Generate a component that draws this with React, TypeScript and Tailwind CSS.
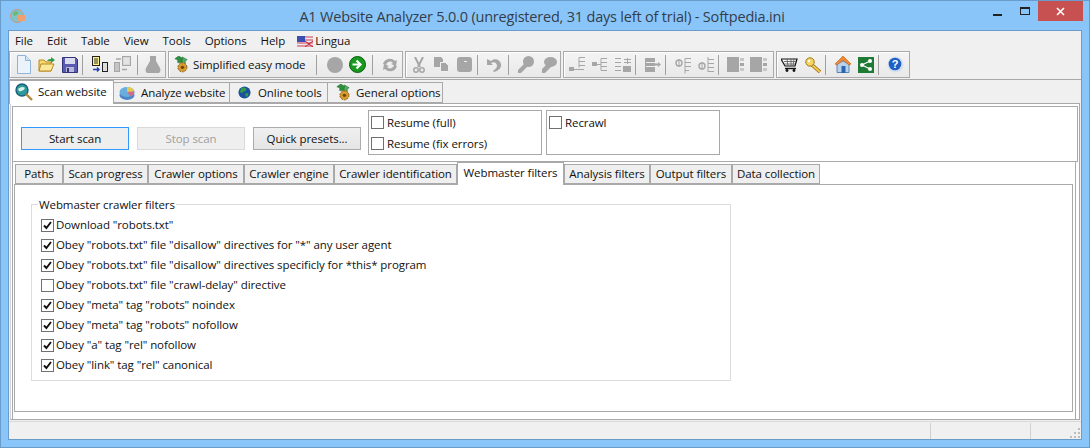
import React from 'react';

const Sep = () => <div className="w-[1px] h-[20px] bg-[#a0a0a0] mx-[1px] shrink-0" />;

const Slot: React.FC<{ children: React.ReactNode }> = ({ children }) => (
  <div className="w-[23px] h-[22px] flex items-center justify-center shrink-0">{children}</div>
);

const G = '#a6a6a6';

const Cog = () => (
  <svg width="17" height="17" viewBox="0 0 18 18">
    <path d="M6 0l5 3-1.500 1v3H5V4L2 3z" fill="#2f8f3f" stroke="#1c6a2b" strokeWidth="0.6" />
    <path d="M10 1l5 3-2 1v3h-3z" fill="#52b060" stroke="#1c6a2b" strokeWidth="0.6" />
    <circle cx="10" cy="12" r="4.800" fill="#d79a2b" stroke="#8a5a10" strokeWidth="1" strokeDasharray="2 1" />
    <circle cx="10" cy="12" r="1.800" fill="#6d4510" />
  </svg>
);

const toolbarIcons = {
  newFile: (
    <svg width="16" height="19" viewBox="0 0 16 19">
      <path d="M1.500 .5h8l5 5v13h-13z" fill="#eaf3fc" stroke="#8fb4d8" />
      <path d="M9.500 .5v5h5" fill="#cfe3f5" stroke="#8fb4d8" />
    </svg>
  ),
  open: (
    <svg width="17" height="16" viewBox="0 0 17 16">
      <path d="M1 3h5l2 2h5v9H1z" fill="#f5d76e" stroke="#b98a1e" />
      <path d="M3 7h13l-3 7H1z" fill="#fbe89a" stroke="#b98a1e" />
      <path d="M9 4c1-2 3-2 4-2V0l4 3-4 3V4c-1 0-3 0-4 0z" fill="#2f9e44" />
    </svg>
  ),
  save: (
    <svg width="16" height="16" viewBox="0 0 16 16">
      <path d="M.5 .5h13l2 2v13H.5z" fill="#5a5ab0" stroke="#34347e" />
      <rect x="3" y="1" width="10" height="6" fill="#d8dcec" />
      <rect x="4" y="10" width="8" height="5" fill="#b8b8d8" />
      <rect x="5" y="11" width="2" height="4" fill="#34347e" />
    </svg>
  ),
  copyDb: (
    <svg width="16" height="17" viewBox="0 0 16 17">
      <rect x=".5" y=".5" width="7" height="9" fill="#fff38a" stroke="#222" />
      <path d="M2 3h4M2 5h4M2 7h4" stroke="#333" />
      <rect x="10.500" y="6.500" width="5" height="9" fill="#ddd" stroke="#222" />
      <path d="M1 13.500h6m-2-2l2 2-2 2" stroke="#1f3fb0" strokeWidth="1.400" fill="none" />
    </svg>
  ),
  copyDbOff: (
    <svg width="17" height="17" viewBox="0 0 17 17">
      <rect x=".5" y="6.500" width="5" height="9" fill="#c4c4c4" stroke={G} />
      <rect x="8.500" y=".5" width="8" height="9" fill="#d8d8d8" stroke={G} />
      <path d="M10 3h5M10 5h5M10 7h5" stroke="#eee" />
      <path d="M8 13.500h5M2 3h5" stroke={G} strokeWidth="1.400" />
    </svg>
  ),
  flask: (
    <svg width="16" height="17" viewBox="0 0 16 17">
      <path d="M5 0h6v5l4 7c1 3 0 5-2 5H3c-2 0-3-2-2-5l4-7z" fill={G} />
    </svg>
  ),
  circle: <div className="w-[16px] h-[16px] rounded-full bg-[#a6a6a6]" />,
  go: (
    <svg width="17" height="17" viewBox="0 0 17 17">
      <circle cx="8.500" cy="8.500" r="8" fill="#179a1f" stroke="#0b5c10" />
      <path d="M3.500 8.500h7M7.500 4.500l4 4-4 4" stroke="#fff" strokeWidth="2.200" fill="none" />
    </svg>
  ),
  refresh: (
    <svg width="16" height="16" viewBox="0 0 16 16">
      <path d="M1 7a7 7 0 0 1 12-3l2-1-1 6-5-2 2-1a4 4 0 0 0-7 2z" fill={G} />
      <path d="M15 9a7 7 0 0 1-12 3l-2 1 1-6 5 2-2 1a4 4 0 0 0 7-2z" fill={G} />
    </svg>
  ),
  scissors: (
    <svg width="12" height="16" viewBox="0 0 12 16">
      <path d="M2 0l5 10M10 0L5 10" stroke={G} strokeWidth="2" />
      <circle cx="3" cy="13" r="2.200" fill="none" stroke={G} strokeWidth="1.500" />
      <circle cx="9" cy="13" r="2.200" fill="none" stroke={G} strokeWidth="1.500" />
    </svg>
  ),
  copy: (
    <svg width="15" height="15" viewBox="0 0 15 15">
      <path d="M0 0h7l2 2v3H6v5H0z" fill={G} />
      <path d="M6.500 5.500h5l3 3v6h-8z" fill={G} stroke="#efefef" />
    </svg>
  ),
  paste: (
    <svg width="15" height="15" viewBox="0 0 15 15">
      <rect x="0" y="0" width="15" height="15" rx="3" fill={G} />
      <rect x="7" y="4" width="3" height="1" fill="#efefef" />
    </svg>
  ),
  undo: (
    <svg width="15" height="15" viewBox="0 0 15 15">
      <path d="M0 2v6h6L4 6c3-2 6 0 6 3 0 2-2 3-4 5l1 1c4-1 8-4 7-8-1-5-7-6-10-3z" fill={G} />
    </svg>
  ),
  keyLeft: (
    <svg width="16" height="17" viewBox="0 0 16 17">
      <circle cx="10.500" cy="5.500" r="5.500" fill={G} />
      <path d="M7 7l-7 7v3h3l8-8z" fill={G} />
    </svg>
  ),
  keyBig: (
    <svg width="17" height="16" viewBox="0 0 17 16">
      <ellipse cx="10.500" cy="5" rx="6.500" ry="5" fill={G} />
      <path d="M7 7l-5 5v4h3l7-7z" fill={G} />
    </svg>
  ),
  rowsA: (
    <svg width="16" height="15" viewBox="0 0 16 15">
      <path d="M10 .5h6M10 4.500h6M10 8.500h6M10 12.500h5M10 .5v10" stroke={G} fill="none" />
      <rect x="0" y="10" width="5" height="4" fill={G} />
      <path d="M5 12.500h5" stroke={G} />
    </svg>
  ),
  rowsB: (
    <svg width="15" height="14" viewBox="0 0 15 14">
      <path d="M9 .5h6M9 4.500h6M9 8.500h6M9 12.500h6M9 .5v12" stroke={G} fill="none" />
      <rect x="0" y="4" width="5" height="4" fill={G} />
      <path d="M5 6.500h4" stroke={G} />
    </svg>
  ),
  rowsC: (
    <svg width="16" height="14" viewBox="0 0 16 14">
      <path d="M0 .5h6M0 4.500h6M0 8.500h6M0 12.500h6" stroke={G} fill="none" />
      <path d="M9 1.500h7M9 4.500h7M12.500 0v6" stroke={G} fill="none" />
      <rect x="8" y="8" width="8" height="6" fill={G} />
    </svg>
  ),
  boxArrow: (
    <svg width="16" height="14" viewBox="0 0 16 14">
      <rect x="0" y="0" width="10" height="14" fill={G} />
      <path d="M1 4.500h9M1 8.500h9" stroke="#efefef" />
      <path d="M10 6.500h3" stroke={G} strokeWidth="2" />
      <path d="M13 4l3 2.500-3 2.500z" fill={G} />
    </svg>
  ),
  phiA: (
    <svg width="16" height="18" viewBox="0 0 16 18">
      <circle cx="4" cy="7" r="3" fill="none" stroke={G} strokeWidth="1.400" />
      <path d="M4 3v8M10 2.500h6M10 6.500h6M10 10.500h6M10 14.500h4M10 2.500v15" stroke={G} fill="none" />
    </svg>
  ),
  phiB: (
    <svg width="16" height="18" viewBox="0 0 16 18">
      <circle cx="4" cy="10" r="3" fill="none" stroke={G} strokeWidth="1.400" />
      <path d="M4 6v8M10 3.500h6M10 7.500h6M10 11.500h6M10 15.500h6M10 1v15" stroke={G} fill="none" />
    </svg>
  ),
  blocks: (
    <svg width="17" height="15" viewBox="0 0 17 15">
      <rect x="0" y="0" width="12" height="15" fill={G} />
      <rect x="13" y="1" width="4" height="3" fill="#c8c8c8" />
      <rect x="13" y="6" width="4" height="3" fill={G} />
      <rect x="13" y="11" width="4" height="3" fill="#c8c8c8" />
    </svg>
  ),
  cart: (
    <svg width="17" height="14" viewBox="0 0 17 14">
      <path d="M0 1h16l-2 7H4z" fill="#f4f4f4" stroke="#111" strokeWidth="1.200" />
      <path d="M3 3.500h12M3.500 6h10.500M6 1l1 7M10 1v7M13 1l-1 7" stroke="#555" strokeWidth="0.800" />
      <path d="M4 10.500h11" stroke="#111" strokeWidth="1.400" />
      <circle cx="6" cy="12.500" r="1.400" fill="#111" />
      <circle cx="13" cy="12.500" r="1.400" fill="#111" />
    </svg>
  ),
  goldKey: (
    <svg width="16" height="16" viewBox="0 0 16 16">
      <path d="M6 7l9 8" stroke="#9b6d10" strokeWidth="3.400" />
      <path d="M6 7l9 8" stroke="#f3cc4c" strokeWidth="1.800" />
      <circle cx="5" cy="5" r="4.200" fill="#f6d666" stroke="#a3750f" />
      <circle cx="4" cy="4" r="1.200" fill="#fff" />
    </svg>
  ),
  home: (
    <svg width="16" height="17" viewBox="0 0 16 17">
      <path d="M2 8l6-3 6 3v8.500H2z" fill="#b7d2ee" stroke="#5d86b3" />
      <path d="M0 8l8-8 8 8-2 1-6-5-6 5z" fill="#f08a35" stroke="#bd5d12" strokeWidth="0.600" />
      <rect x="6.500" y="10" width="4" height="7" fill="#2d66a8" />
    </svg>
  ),
  share: (
    <svg width="16" height="16" viewBox="0 0 16 16">
      <rect width="16" height="16" fill="#1f7a34" />
      <path d="M4 8l8-4M4 8l8 4" stroke="#fff" strokeWidth="1.200" />
      <circle cx="4" cy="8" r="2" fill="#fff" />
      <circle cx="12" cy="4" r="2" fill="#fff" />
      <circle cx="12" cy="12" r="2" fill="#fff" />
    </svg>
  ),
  help: (
    <svg width="17" height="17" viewBox="0 0 17 17">
      <circle cx="8.500" cy="8.500" r="8" fill="#d5dff0" />
      <circle cx="8" cy="8" r="6.300" fill="#1f5fc4" />
      <text x="8" y="12" fontSize="11" fontWeight="700" fill="#fff" textAnchor="middle" fontFamily="Liberation Sans">?</text>
    </svg>
  ),
};

const ScanIcon = () => (
  <svg width="18" height="18" viewBox="0 0 18 18">
    <circle cx="7" cy="7" r="6" fill="#2f9a9a" stroke="#1a5f7a" strokeWidth="1.400" />
    <path d="M3 6c2-2 5-3 7-1-1 2-4 4-6 3z" fill="#d9f0e8" />
    <path d="M11 11l6 6" stroke="#b58a3c" strokeWidth="2.400" />
  </svg>
);

const PieIcon = () => (
  <svg width="16" height="14" viewBox="0 0 16 14">
    <ellipse cx="8" cy="9" rx="7.500" ry="5" fill="#4a86c8" />
    <ellipse cx="8" cy="6" rx="7.500" ry="5" fill="#6aaee0" />
    <path d="M8 6V1c4 0 6 2 7.500 4.500z" fill="#e7c84a" />
    <path d="M8 6l7.500-.5c0 2-2 4-4 5z" fill="#d26a8a" />
  </svg>
);

const GlobeIcon = () => (
  <svg width="13" height="13" viewBox="0 0 14 14">
    <circle cx="7" cy="7" r="6.500" fill="#1c4fa0" />
    <path d="M4 2c3-1 5 0 5 2S6 5 5 7 3 7 2 6z" fill="#2f9e44" />
    <path d="M8 8c2-1 4 0 3 2s-2 2-3 1z" fill="#2f9e44" />
  </svg>
);

const AppIcon = () => (
  <svg width="16" height="16" viewBox="0 0 16 16">
    <circle cx="7" cy="8" r="6.500" fill="#7cc4c8" stroke="#e0876a" strokeWidth="0.800" />
    <path d="M3 5c2-2 4-2 5-1S6 8 4 8z" fill="#6fb86f" />
    <rect x="8" y="7" width="7" height="6" fill="#f0a070" />
  </svg>
);

const Flag = () => (
  <svg width="16" height="11" viewBox="0 0 16 11">
    <rect width="16" height="11" fill="#e8e8f4" />
    <path d="M0 1h16M0 4h16M0 7h16M0 10h16" stroke="#d8404a" />
    <rect width="8" height="6" fill="#3a4fb0" />
    <path d="M8 11l8-6M8 5l8 6" stroke="#c02030" />
  </svg>
);

const Check: React.FC<{ on?: boolean }> = ({ on }) => (
  <div className="w-[13px] h-[13px] border border-[#707070] bg-white flex items-center justify-center shrink-0">
    {on && (
      <svg width="9" height="9" viewBox="0 0 9 9">
        <path d="M1 4.500L3.400 7 8 1" stroke="#111" strokeWidth="1.900" fill="none" />
      </svg>
    )}
  </div>
);

const Group: React.FC<{ className: string; children: React.ReactNode }> = ({ className, children }) => (
  <div className={`h-[27px] flex items-center border border-[#a9a9a9] shadow-[inset_1px_1px_0_#fff] bg-gradient-to-b from-[#f4f4f4] to-[#e9e9e9] shrink-0 ${className}`}>
    {children}
  </div>
);

const Button: React.FC<{ label: string; className: string }> = ({ label, className }) => (
  <button className={`w-[108px] h-[23px] border flex items-center justify-center ${className}`}>{label}</button>
);

const topTabs = [
  { label: 'Analyze website', icon: <PieIcon />, cls: 'w-[116px] pl-[5px] gap-[6px]' },
  { label: 'Online tools', icon: <GlobeIcon />, cls: 'w-[98px] pl-[8px] gap-[7px]' },
  { label: 'General options', icon: <Cog />, cls: 'w-[115px] pl-[7px] gap-[4px]' },
];

const subTabs = [
  { label: 'Paths', w: 'w-[48px]' },
  { label: 'Scan progress', w: 'w-[85px]' },
  { label: 'Crawler options', w: 'w-[96px]' },
  { label: 'Crawler engine', w: 'w-[90px]' },
  { label: 'Crawler identification', w: 'w-[123px]' },
];

const subTabsRight = [
  { label: 'Analysis filters', w: 'w-[86px]' },
  { label: 'Output filters', w: 'w-[82px]' },
  { label: 'Data collection', w: 'w-[88px]' },
];

const filters = [
  { label: 'Download "robots.txt"', on: true },
  { label: 'Obey "robots.txt" file "disallow" directives for "*" any user agent', on: true },
  { label: 'Obey "robots.txt" file "disallow" directives specificly for *this* program', on: true },
  { label: 'Obey "robots.txt" file "crawl-delay" directive', on: false },
  { label: 'Obey "meta" tag "robots" noindex', on: true },
  { label: 'Obey "meta" tag "robots" nofollow', on: true },
  { label: 'Obey "a" tag "rel" nofollow', on: true },
  { label: 'Obey "link" tag "rel" canonical', on: true },
];

const menus = ['File', 'Edit', 'Table', 'View', 'Tools', 'Options', 'Help'];

export default function App() {
  const i = toolbarIcons;
  return (
    <div className="w-[1090px] h-[448px] overflow-hidden flex flex-col bg-[#8ac5fa] border border-[#6a9ccb] text-[11.5px] tracking-[-0.08px] whitespace-nowrap text-[#111] font-['Open_Sans','Noto_Sans',sans-serif]">
      {/* title bar */}
      <div className="h-[29px] flex items-center shrink-0">
        <div className="ml-[9px]"><AppIcon /></div>
        <div className="flex-1 text-center text-[14.500px] text-[#333d49] tracking-[-0.2px] pl-[76px] pt-[2px]">
          A1 Website Analyzer 5.0.0 (unregistered, 31 days left of trial) - Softpedia.ini
        </div>
        <div className="flex items-start self-start">
          <div className="w-[30px] h-[20px] flex items-center justify-center">
            <div className="w-[9px] h-[2px] bg-[#222] mt-[8px]" />
          </div>
          <div className="w-[26px] h-[20px] flex items-center justify-center">
            <div className="w-[10px] h-[8px] border border-t-2 border-[#222]" />
          </div>
          <div className="w-[45px] h-[20px] bg-[#c75050] flex items-center justify-center text-white">
            <svg width="9" height="9" viewBox="0 0 9 9">
              <path d="M1 1l7 7M8 1l-7 7" stroke="#fff" strokeWidth="1.600" />
            </svg>
          </div>
          <div className="w-[6px]" />
        </div>
      </div>

      {/* client area */}
      <div className="flex-1 mx-[7px] mb-[7px] bg-[#f0f0f0] border border-[#6a9ccb] flex flex-col min-h-0">
        {/* menu */}
        <div className="h-[20px] flex items-center pl-[6px] shrink-0">
          <div className="flex gap-[14px]">
            {menus.map((m) => (
              <span key={m}>{m}</span>
            ))}
          </div>
          <div className="ml-[12px] flex items-center gap-[2px]">
            <Flag />
            <span>Lingua</span>
          </div>
        </div>

        {/* toolbar */}
        <div className="flex gap-[2px] pb-[1px] border-b border-[#a9a9a9] shrink-0 h-[29px]">
          <Group className="w-[157px] pl-[2px]">
            <Slot>{i.newFile}</Slot>
            <Slot>{i.open}</Slot>
            <Slot>{i.save}</Slot>
            <Sep />
            <div className="w-[4px]" />
            <Slot>{i.copyDb}</Slot>
            <Slot>{i.copyDbOff}</Slot>
            <div className="w-[2px]" />
            <Sep />
            <div className="w-[2px]" />
            <Slot>{i.flask}</Slot>
          </Group>
          <Group className="w-[235px] pl-[1px]">
            <Slot><Cog /></Slot>
            <span className="w-[122px]">Simplified easy mode</span>
            <Sep />
            <div className="w-[5px]" />
            <Slot>{i.circle}</Slot>
            <Slot>{i.go}</Slot>
            <div className="w-[2px]" />
            <Sep />
            <div className="w-[4px]" />
            <Slot>{i.refresh}</Slot>
          </Group>
          <Group className="w-[156px]">
            <div className="w-[1px]" />
            <Slot>{i.scissors}</Slot>
            <Slot>{i.copy}</Slot>
            <Slot>{i.paste}</Slot>
            <Sep />
            <div className="w-[4px]" />
            <Slot>{i.undo}</Slot>
            <div className="w-[1px]" />
            <Sep />
            <div className="w-[4px]" />
            <Slot>{i.keyLeft}</Slot>
            <Slot>{i.keyBig}</Slot>
          </Group>
          <Group className="w-[211px] pl-[1px]">
            <Slot>{i.rowsA}</Slot>
            <Slot>{i.rowsB}</Slot>
            <Slot>{i.rowsC}</Slot>
            <Sep />
            <div className="w-[4px]" />
            <Slot>{i.boxArrow}</Slot>
            <Sep />
            <div className="w-[4px]" />
            <Slot>{i.phiA}</Slot>
            <Slot>{i.phiB}</Slot>
            <Sep />
            <div className="w-[4px]" />
            <Slot>{i.blocks}</Slot>
            <Slot>{i.blocks}</Slot>
          </Group>
          <Group className="w-[134px] pl-[1px]">
            <Slot>{i.cart}</Slot>
            <Slot>{i.goldKey}</Slot>
            <Sep />
            <div className="w-[4px]" />
            <Slot>{i.home}</Slot>
            <Slot>{i.share}</Slot>
            <Sep />
            <div className="w-[4px]" />
            <Slot>{i.help}</Slot>
          </Group>
        </div>

        {/* main tabs */}
        <div className="h-[23px] flex items-end shrink-0 relative z-10">
          <div className="w-[105px] h-[24px] bg-white border border-b-0 border-[#a9a9a9] flex items-center gap-[5px] pl-[5px] pb-[2px] -mb-[1px]">
            <ScanIcon />
            <span>Scan website</span>
          </div>
          {topTabs.map((t) => (
            <div key={t.label} className={`${t.cls} h-[21px] bg-[#f0f0f0] border border-l-0 border-[#a9a9a9] flex items-center`}>
              {t.icon}
              <span>{t.label}</span>
            </div>
          ))}
        </div>

        {/* page */}
        <div className="flex-1 min-h-0 bg-white border border-[#a9a9a9] border-l-[#d4d4d4] ml-[1px] mr-[1px] flex flex-col">
          {/* scan controls */}
          <div className="h-[56px] shrink-0 flex items-start pl-[8px] pt-[3px] border border-[#a9a9a9] ml-[1px] mr-[1px] mt-[2px] gap-[7px]">
            <div className="flex gap-[8px] pt-[17px]">
              <Button label="Start scan" className="border-[#3399ff] bg-[#eeeeee]" />
              <Button label="Stop scan" className="border-[#d9d9d9] bg-[#efefef] text-[#a0a0a0]" />
              <Button label="Quick presets..." className="border-[#acacac] bg-gradient-to-b from-[#f0f0f0] to-[#e5e5e5]" />
            </div>
            <div className="w-[174px] h-[45px] border border-[#a9a9a9] flex flex-col pl-[2px] pt-[3px] gap-[4px]">
              <div className="flex items-center gap-[3px]"><Check /><span>Resume (full)</span></div>
              <div className="flex items-center gap-[3px]"><Check /><span>Resume (fix errors)</span></div>
            </div>
            <div className="w-[174px] h-[45px] border border-[#a9a9a9] flex pl-[2px] pt-[3px] -ml-[3px] items-start">
              <div className="flex items-center gap-[3px]"><Check /><span>Recrawl</span></div>
            </div>
          </div>

          {/* lower frame */}
          <div className="flex-1 min-h-0 flex flex-col border-x border-[#a9a9a9] ml-[1px] mr-[3px]">
            {/* sub tabs */}
            <div className="h-[22px] shrink-0 flex items-end pl-[2px] relative z-10">
              {subTabs.map((t) => (
                <div key={t.label} className={`${t.w} h-[20px] bg-[#efefef] border border-[#a9a9a9] flex items-center justify-center`}>{t.label}</div>
              ))}
              <div className="w-[107px] h-[23px] bg-white border border-b-0 border-[#a9a9a9] -mb-[1px] flex items-center justify-center pb-[2px]">Webmaster filters</div>
              {subTabsRight.map((t) => (
                <div key={t.label} className={`${t.w} h-[20px] bg-[#efefef] border border-[#a9a9a9] flex items-center justify-center`}>{t.label}</div>
              ))}
            </div>

            {/* sub page */}
            <div className="flex-1 min-h-0 border border-[#a9a9a9] ml-[1px] mr-[2px] mb-[7px] pl-[16px] pt-[19px]">
              <div className="w-[700px] h-[177px] border border-[#dcdcdc] relative pl-[9px] pt-[10px]">
                <span className="absolute -top-[9px] left-[6px] bg-white px-[1px]">Webmaster crawler filters</span>
                <div className="flex flex-col">
                  {filters.map((f) => (
                    <div key={f.label} className="h-[20px] flex items-center gap-[2px]">
                      <Check on={f.on} />
                      <span>{f.label}</span>
                    </div>
                  ))}
                </div>
              </div>
            </div>
          </div>
        </div>

        {/* status bar */}
        <div className="h-[18px] mt-[1px] border-t border-[#d9d9d9] shrink-0 flex justify-end items-center relative">
          <div className="w-[1px] h-[16px] bg-[#d0d0d0] mr-[99px]" />
          <div className="w-[1px] h-[16px] bg-[#d0d0d0] mr-[50px]" />
          <svg className="absolute right-[1px] bottom-[1px]" width="10" height="10" viewBox="0 0 10 10">
            <path d="M8 0h2v2H8zM8 4h2v2H8zM4 4h2v2H4zM8 8h2v2H8zM4 8h2v2H4zM0 8h2v2H0z" fill="#bdbdbd" />
          </svg>
        </div>
      </div>
    </div>
  );
}
